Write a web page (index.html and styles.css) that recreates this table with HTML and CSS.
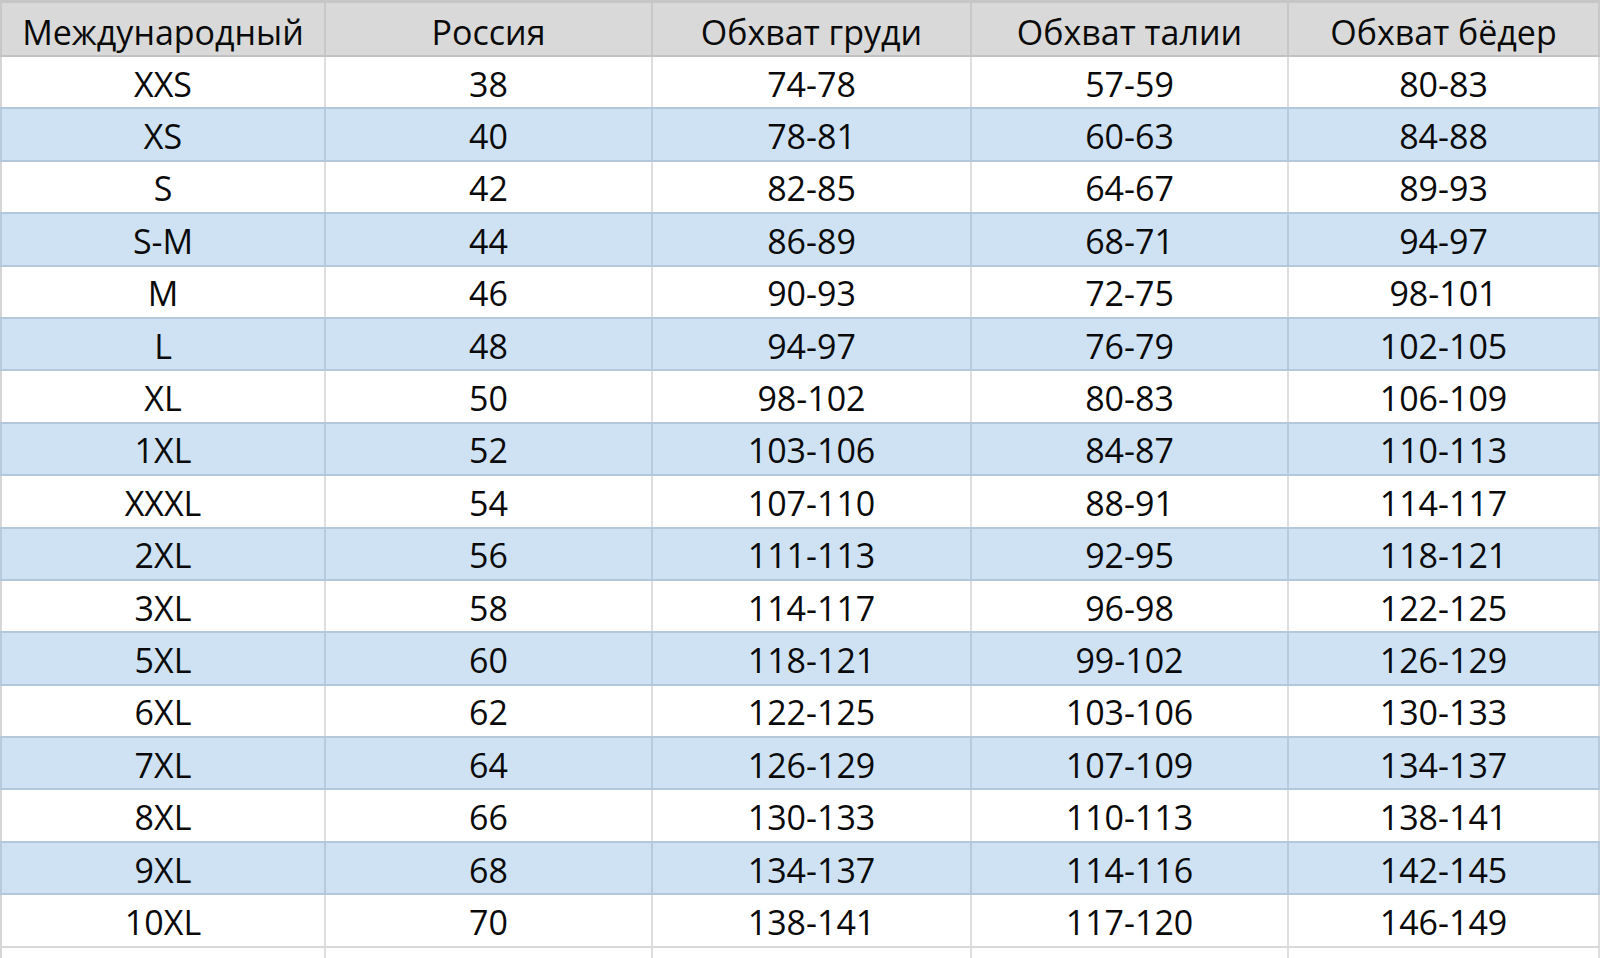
FILE: index.html
```html
<!DOCTYPE html>
<html lang="ru">
<head>
<meta charset="utf-8">
<title>Таблица размеров</title>
<link rel="stylesheet" href="styles.css">
</head>
<body>
<div class="sheet">
  <div class="row head">
    <div class="cell">Международный</div>
    <div class="cell">Россия</div>
    <div class="cell">Обхват груди</div>
    <div class="cell">Обхват талии</div>
    <div class="cell">Обхват бёдер</div>
  </div>
  <div class="row"><div class="cell">XXS</div><div class="cell">38</div><div class="cell">74-78</div><div class="cell">57-59</div><div class="cell">80-83</div></div>
  <div class="row alt"><div class="cell">XS</div><div class="cell">40</div><div class="cell">78-81</div><div class="cell">60-63</div><div class="cell">84-88</div></div>
  <div class="row"><div class="cell">S</div><div class="cell">42</div><div class="cell">82-85</div><div class="cell">64-67</div><div class="cell">89-93</div></div>
  <div class="row alt"><div class="cell">S-M</div><div class="cell">44</div><div class="cell">86-89</div><div class="cell">68-71</div><div class="cell">94-97</div></div>
  <div class="row"><div class="cell">M</div><div class="cell">46</div><div class="cell">90-93</div><div class="cell">72-75</div><div class="cell">98-101</div></div>
  <div class="row alt"><div class="cell">L</div><div class="cell">48</div><div class="cell">94-97</div><div class="cell">76-79</div><div class="cell">102-105</div></div>
  <div class="row"><div class="cell">XL</div><div class="cell">50</div><div class="cell">98-102</div><div class="cell">80-83</div><div class="cell">106-109</div></div>
  <div class="row alt"><div class="cell">1XL</div><div class="cell">52</div><div class="cell">103-106</div><div class="cell">84-87</div><div class="cell">110-113</div></div>
  <div class="row"><div class="cell">XXXL</div><div class="cell">54</div><div class="cell">107-110</div><div class="cell">88-91</div><div class="cell">114-117</div></div>
  <div class="row alt"><div class="cell">2XL</div><div class="cell">56</div><div class="cell">111-113</div><div class="cell">92-95</div><div class="cell">118-121</div></div>
  <div class="row"><div class="cell">3XL</div><div class="cell">58</div><div class="cell">114-117</div><div class="cell">96-98</div><div class="cell">122-125</div></div>
  <div class="row alt"><div class="cell">5XL</div><div class="cell">60</div><div class="cell">118-121</div><div class="cell">99-102</div><div class="cell">126-129</div></div>
  <div class="row"><div class="cell">6XL</div><div class="cell">62</div><div class="cell">122-125</div><div class="cell">103-106</div><div class="cell">130-133</div></div>
  <div class="row alt"><div class="cell">7XL</div><div class="cell">64</div><div class="cell">126-129</div><div class="cell">107-109</div><div class="cell">134-137</div></div>
  <div class="row"><div class="cell">8XL</div><div class="cell">66</div><div class="cell">130-133</div><div class="cell">110-113</div><div class="cell">138-141</div></div>
  <div class="row alt"><div class="cell">9XL</div><div class="cell">68</div><div class="cell">134-137</div><div class="cell">114-116</div><div class="cell">142-145</div></div>
  <div class="row"><div class="cell">10XL</div><div class="cell">70</div><div class="cell">138-141</div><div class="cell">117-120</div><div class="cell">146-149</div></div>
  <div class="row tail"><div class="cell"></div><div class="cell"></div><div class="cell"></div><div class="cell"></div><div class="cell"></div></div>
</div>
</body>
</html>
```

FILE: styles.css
```css
html, body {
  margin: 0;
  padding: 0;
  background: #ffffff;
}

.sheet {
  width: 1600px;
  height: 958px;
  overflow: hidden;
  font-family: "Open Sans", "Liberation Sans", sans-serif;
  font-size: 34px;
  font-weight: 500;
  color: #0a0a0a;
}

.row {
  display: grid;
  grid-template-columns: 326px 327px 319px 317px 311px;
  height: 52.4px;
  box-sizing: border-box;
  border-bottom: 2px solid #d9d9d9;
  background: #ffffff;
}

.cell {
  display: flex;
  align-items: center;
  justify-content: center;
  border-right: 2px solid #dedede;
  box-sizing: border-box;
  white-space: nowrap;
  padding-top: 3px;
}

.cell:first-child {
  border-left: 2px solid #d6d6d6;
}

.head {
  height: 57px;
  background: #d9d9d9;
  border-top: 3px solid #c6c6c6;
  border-bottom: 2px solid #c2c2c2;
}

.head .cell {
  border-right-color: #c8c8c8;
  padding-top: 6px;
}

.head .cell:first-child {
  border-left-color: #c8c8c8;
}

.alt {
  background: #cfe2f3;
  border-bottom-color: #b4c8dc;
  margin-top: -2px;
  border-top: 2px solid #b4c8dc;
  height: 54.4px;
}

.alt .cell {
  border-right-color: #b7cbdf;
}

.alt .cell:first-child {
  border-left-color: #b7cbdf;
}

.tail {
  height: 20px;
  border-bottom: none;
}
```
